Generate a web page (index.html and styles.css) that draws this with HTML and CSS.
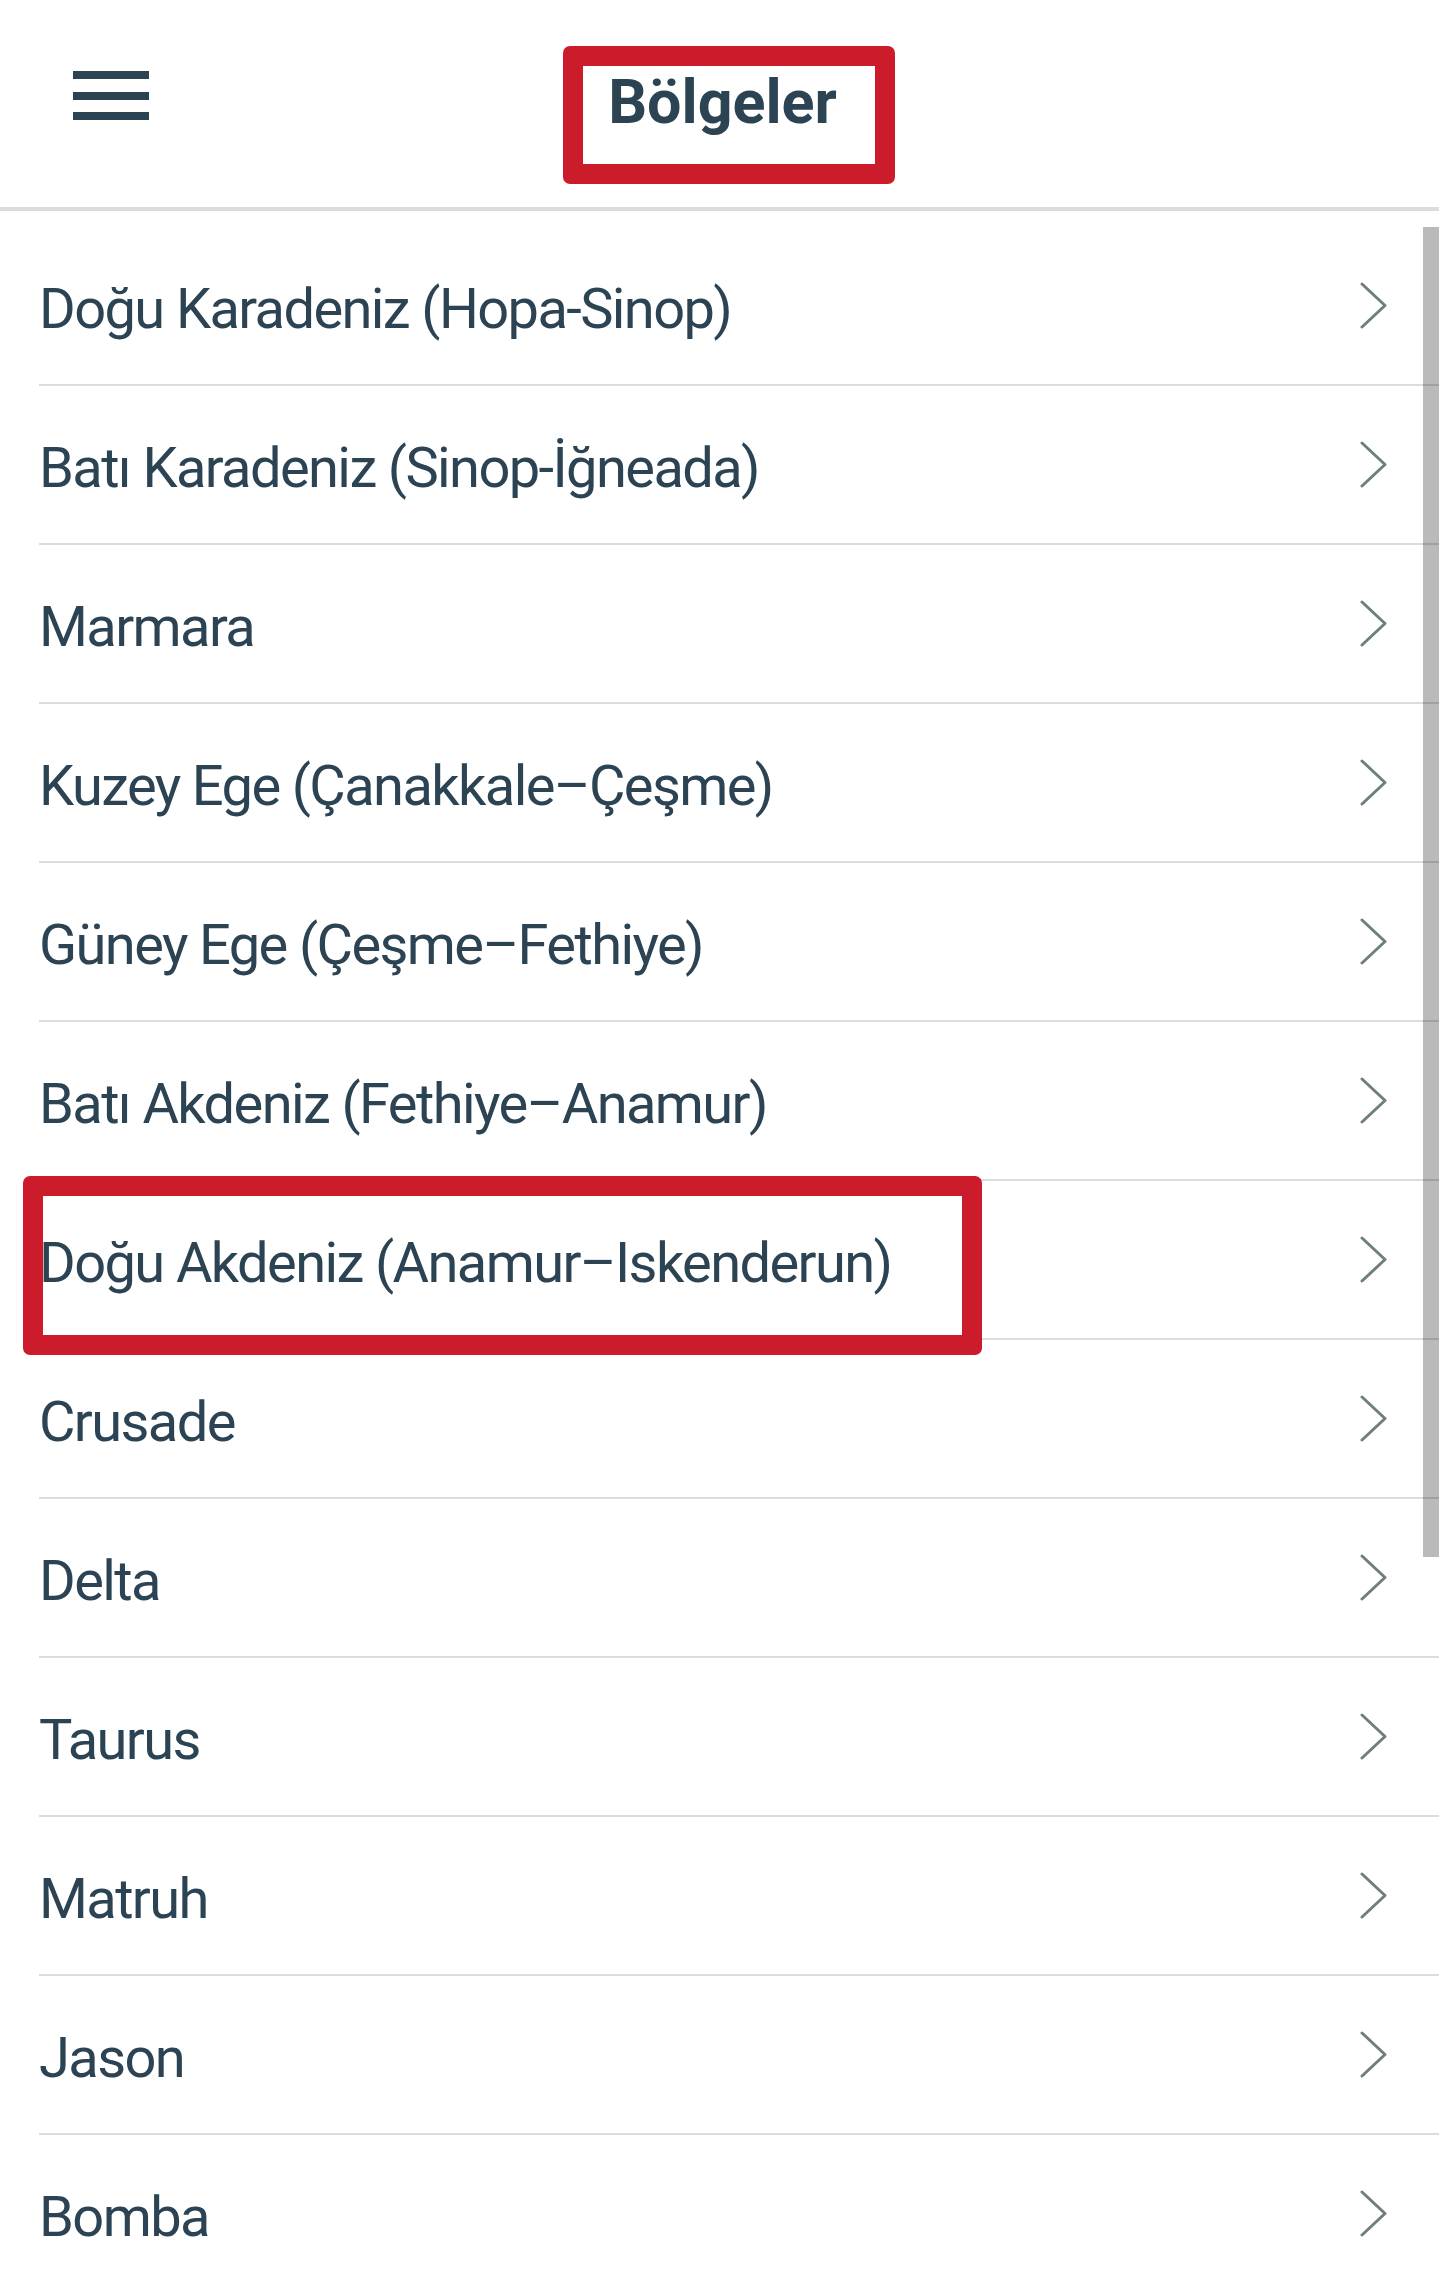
FILE: index.html
```html
<!DOCTYPE html>
<html lang="tr">
<head>
<meta charset="utf-8">
<title>Bölgeler</title>
<link rel="stylesheet" href="styles.css">
</head>
<body>
<header class="topbar">
  <div class="menu" aria-label="Menü"><span></span><span></span><span></span></div>
  <h1 class="title">Bölgeler</h1>
  <div></div>
  <span class="annot annot-title"></span>
</header>
<main class="regions">
  <ul class="list">
    <li class="row"><span class="label">Doğu Karadeniz (Hopa-Sinop)</span><svg class="chev" viewBox="0 0 27 47"><polyline points="2,2 25,23.5 2,45"/></svg></li>
    <li class="row"><span class="label">Batı Karadeniz (Sinop-İğneada)</span><svg class="chev" viewBox="0 0 27 47"><polyline points="2,2 25,23.5 2,45"/></svg></li>
    <li class="row"><span class="label">Marmara</span><svg class="chev" viewBox="0 0 27 47"><polyline points="2,2 25,23.5 2,45"/></svg></li>
    <li class="row"><span class="label">Kuzey Ege (Çanakkale–Çeşme)</span><svg class="chev" viewBox="0 0 27 47"><polyline points="2,2 25,23.5 2,45"/></svg></li>
    <li class="row"><span class="label">Güney Ege (Çeşme–Fethiye)</span><svg class="chev" viewBox="0 0 27 47"><polyline points="2,2 25,23.5 2,45"/></svg></li>
    <li class="row"><span class="label">Batı Akdeniz (Fethiye–Anamur)</span><svg class="chev" viewBox="0 0 27 47"><polyline points="2,2 25,23.5 2,45"/></svg></li>
    <li class="row"><span class="label">Doğu Akdeniz (Anamur–Iskenderun)</span><svg class="chev" viewBox="0 0 27 47"><polyline points="2,2 25,23.5 2,45"/></svg><span class="annot annot-row"></span></li>
    <li class="row"><span class="label">Crusade</span><svg class="chev" viewBox="0 0 27 47"><polyline points="2,2 25,23.5 2,45"/></svg></li>
    <li class="row"><span class="label">Delta</span><svg class="chev" viewBox="0 0 27 47"><polyline points="2,2 25,23.5 2,45"/></svg></li>
    <li class="row"><span class="label">Taurus</span><svg class="chev" viewBox="0 0 27 47"><polyline points="2,2 25,23.5 2,45"/></svg></li>
    <li class="row"><span class="label">Matruh</span><svg class="chev" viewBox="0 0 27 47"><polyline points="2,2 25,23.5 2,45"/></svg></li>
    <li class="row"><span class="label">Jason</span><svg class="chev" viewBox="0 0 27 47"><polyline points="2,2 25,23.5 2,45"/></svg></li>
    <li class="row"><span class="label">Bomba</span><svg class="chev" viewBox="0 0 27 47"><polyline points="2,2 25,23.5 2,45"/></svg></li>
  </ul>
  <div class="scrollbar"></div>
</main>
</body>
</html>
```
FILE: styles.css
```css
html, body {
  margin: 0;
  padding: 0;
  overflow: hidden;
  background: #ffffff;
}
body {
  font-family: Roboto, "Liberation Sans", sans-serif;
  color: #2c4354;
  height: 2270px;
}
.topbar {
  position: relative;
  display: grid;
  grid-template-columns: 1fr auto 1fr;
  align-items: start;
  height: 207px;
  border-bottom: 4px solid #dcdcdc;
}
.menu {
  display: flex;
  flex-direction: column;
  gap: 12.5px;
  margin-top: 71px;
  margin-left: 73px;
  width: 76px;
}
.menu span {
  display: block;
  height: 8px;
  background: #2c4354;
}
.title {
  margin: 66px 0 0 6px;
  font-size: 61px;
  font-weight: 700;
  line-height: normal;
}
.annot {
  position: absolute;
  box-sizing: border-box;
  border: 20px solid #cc1c2c;
  border-radius: 7px;
  pointer-events: none;
}
.annot-title {
  left: 563px;
  top: 46px;
  width: 332px;
  height: 138px;
}
.regions {
  position: relative;
}
.list {
  list-style: none;
  margin: 0;
  padding: 16px 0 0 39px;
}
.row {
  position: relative;
  display: flex;
  align-items: center;
  justify-content: space-between;
  border-bottom: 2px solid #dcdcdc;
  padding: 7px 52px 0 0;
  height: 150px;
}
.label {
  font-size: 56px;
  letter-spacing: -1.6px;
  white-space: nowrap;
}
.chev {
  width: 27px;
  height: 47px;
  margin-top: -7px;
  fill: none;
  stroke: #6f7f7c;
  stroke-width: 3;
  stroke-linecap: round;
  stroke-linejoin: round;
}
.annot-row {
  left: -16px;
  top: -5px;
  width: 959px;
  height: 179px;
}
.scrollbar {
  position: absolute;
  right: 0;
  top: 16px;
  width: 16px;
  height: 1330px;
  background: rgba(0, 0, 0, 0.27);
}
```
